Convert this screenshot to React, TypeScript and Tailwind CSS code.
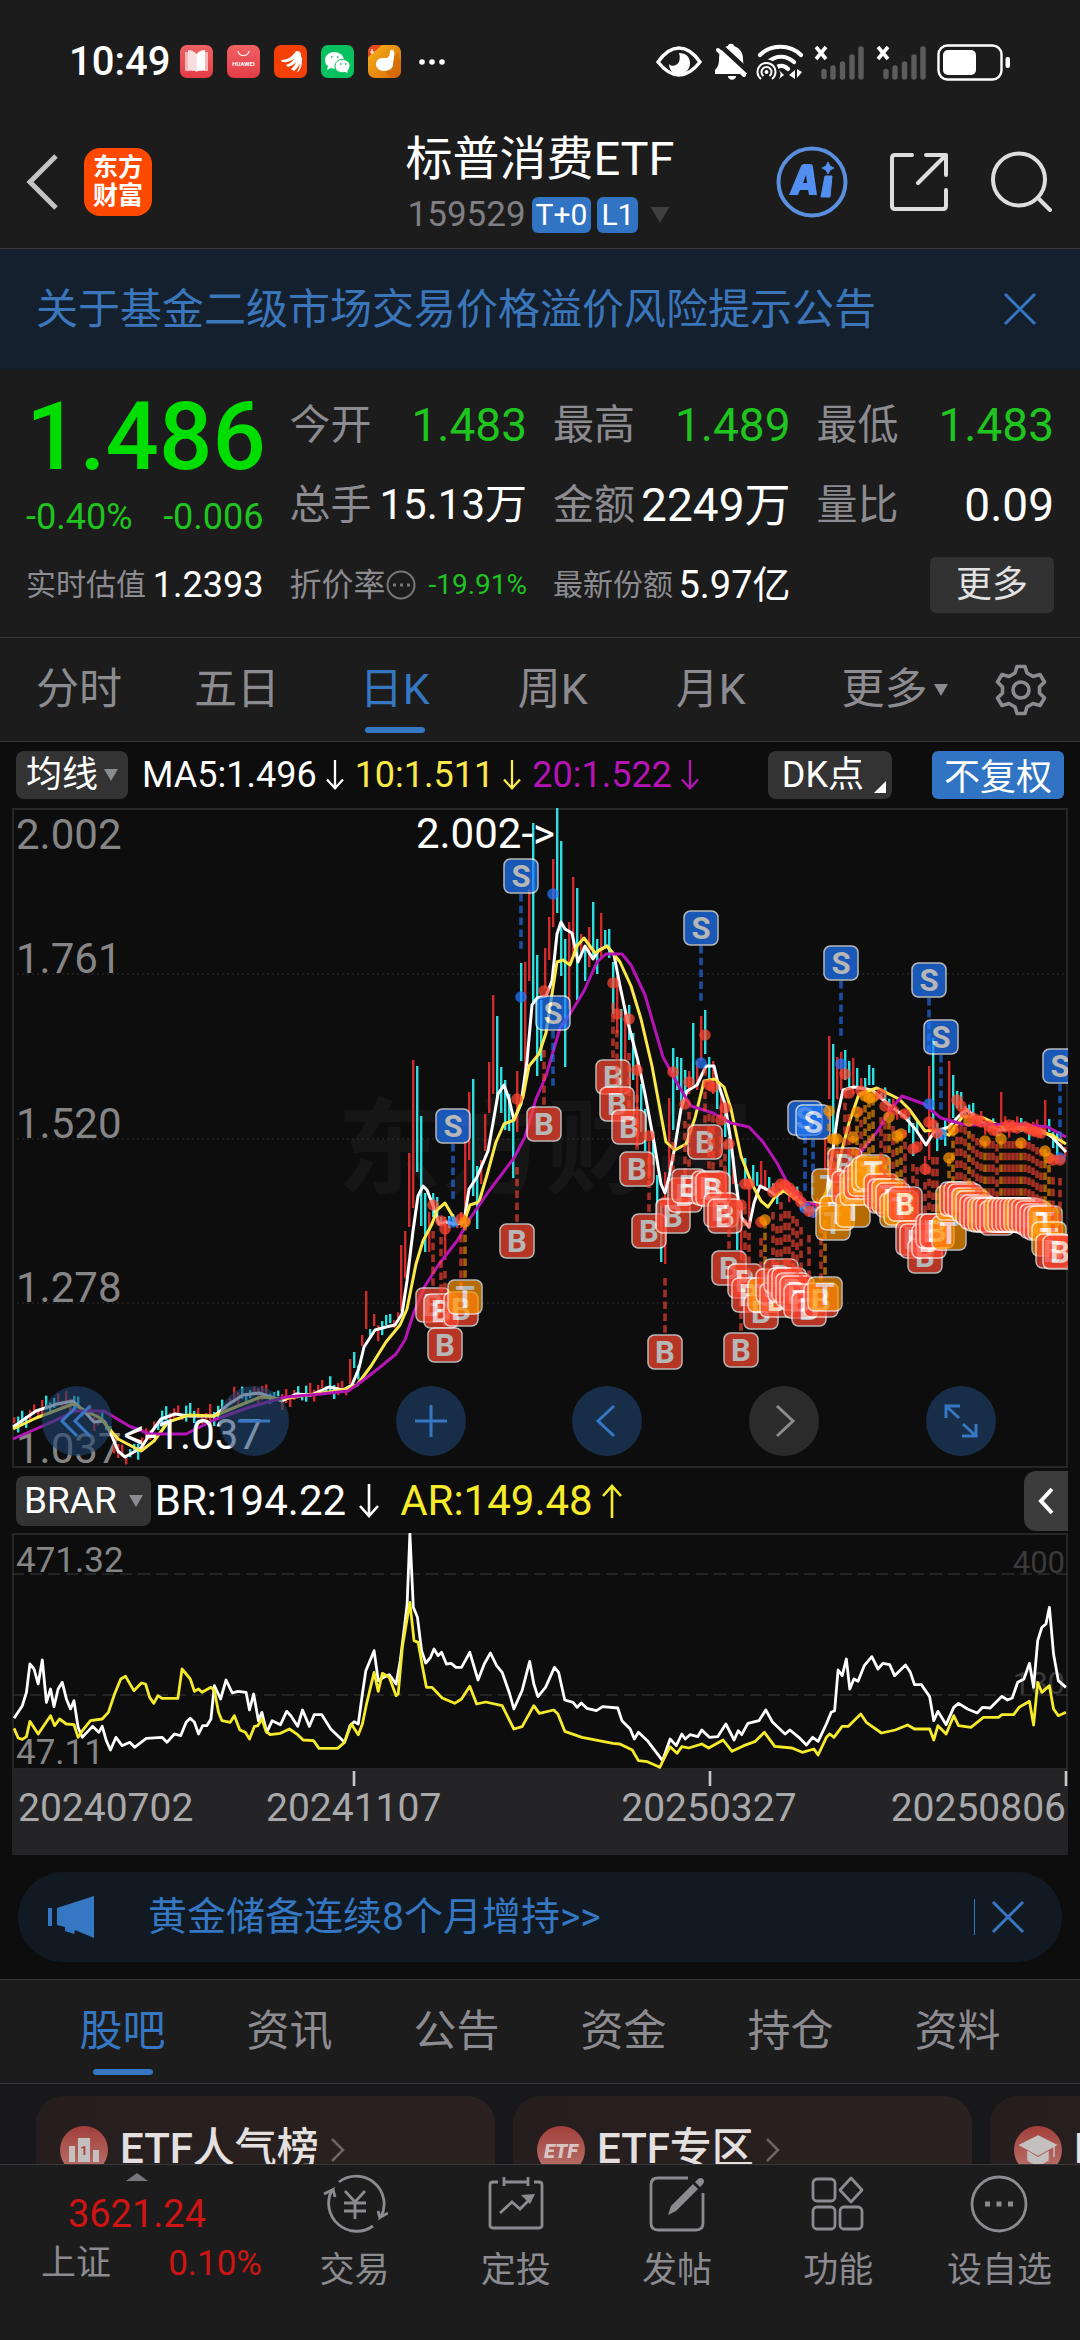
import type { ReactNode } from "react";
import clsx from "clsx";

type Kind = "B" | "S" | "T";
type Point = [number, number];

const periods = ["分时", "五日", "日K", "周K", "月K"];
const sections = ["股吧", "资讯", "公告", "资金", "持仓", "资料"];

const UP = "#d02a2a";
const DOWN = "#2be0e0";

const parse = (s: string): Point[] =>
  s.trim().split(/\s+/).map((p) => p.split(",").map(Number) as Point);

const MA5 = "1,619 24,603 45,596 61,593 72,603 82,614 92,613 99,626 106,643 113,649 129,640 138,626 149,611 163,606 177,608 202,608 217,596 231,587 247,585 259,589 270,593 284,586 299,587 317,579 331,582 340,577 347,560 352,539 363,522 374,519 383,517 390,506 395,473 401,423 406,388 411,378 415,382 422,400 427,416 434,414 443,416 452,414 457,381 465,369 476,343 481,315 486,286 492,277 497,291 502,312 509,296 515,253 520,197 525,190 534,188 540,173 545,126 549,114 553,121 560,125 566,154 573,138 581,151 587,142 595,138 602,147 608,178 615,211 626,253 633,286 642,334 649,376 653,385 657,369 663,338 669,301 675,283 685,277 694,258 702,258 706,275 713,296 719,334 724,376 729,409 737,419 742,395 748,378 756,382 765,388 772,381 783,388 794,402 804,402 813,395 820,348 826,305 831,282 842,279 860,282 876,296 892,308 904,322 914,337 922,324 937,319 945,310 954,301 969,314 987,322 1008,319 1029,322 1040,329 1054,344";
const MA10 = "1,621 24,610 61,596 74,603 88,610 106,631 129,643 142,633 156,614 177,607 202,608 231,596 249,589 270,591 302,586 331,582 345,577 359,558 374,534 388,517 395,501 404,456 411,433 420,416 425,402 433,395 440,407 445,416 452,414 458,397 467,394 475,367 484,334 492,316 502,312 511,289 517,258 527,246 534,225 542,173 545,154 551,152 558,157 565,138 572,130 583,145 595,138 608,154 619,178 629,211 640,258 647,296 654,334 663,342 674,336 683,310 692,273 703,271 712,279 719,301 729,348 740,376 749,393 756,399 765,386 772,383 790,395 808,395 819,376 826,357 837,315 847,286 865,280 887,291 897,301 913,323 922,322 937,327 951,308 972,310 990,319 1019,322 1040,327 1054,336";
const MA20 = "1,631 42,613 63,603 92,603 117,618 138,626 174,626 202,612 238,599 274,589 309,586 336,583 349,574 367,560 384,546 393,532 402,504 413,478 427,456 445,433 459,409 477,383 502,350 513,329 524,291 534,268 548,220 558,206 572,183 585,154 594,146 610,146 619,157 633,187 651,249 665,275 679,298 701,305 719,315 737,319 751,334 765,355 776,376 794,395 808,397 822,388 844,350 865,324 879,301 890,288 912,296 929,310 954,317 1008,316 1036,319 1054,329";

// one entry per session, starting at the breakout: colour, top, bottom
const sessions = `r437-503 r423-470 r345-419 r252-400 c258-364 c308-418 c385-444 r404-444 c385-409 c389-414 c409-416 r409-452
c408-420 c406-418 r410-420 r404-420 r333-414 r284-352 c271-388 c358-421 r352-376 r306-343 r254-305 r187-286 c208-291
c259-305 c272-322 c286-323 c310-370 r263-324 c155-253 r154-263 r81-173 c15-194 c147-268 c192-253 r140-180 r109-152
r51-119 c0-105 c33-168 c131-259 r114-201 r69-150 c80-192 r126-150 c138-173 r119-159 c94-150 c131-166 r105-150 c122-140
c121-150 c154-206 r168-225 c201-286 r201-253 c197-232 c225-272 r253-338 c276-324 c301-343 r334-371 c324-357 c367-419
c395-454 r364-456 r290-362 c240-322 c249-282 c250-296 c262-286 r263-286 c215-277 r253-282 r208-253 c202-246 c249-272
r253-286 c272-301 r286-310 c296-329 c329-395 r348-376 c376-442 r395-452 c350-378 r371-419 c357-376 c364-378 r353-381
r362-383 c369-383`.split(/\s+/);

const laterSessions: Record<number, string> = {
  106: "r329-362", 107: "r228-291", 108: "c236-329", 109: "r249-291", 110: "r244-282", 111: "c242-272", 112: "c253-282",
  113: "r250-286", 114: "c260-282", 115: "r270-282", 116: "c270-282", 117: "c257-277", 118: "c260-277", 128: "c315-348",
  131: "r348-367", 132: "r258-352", 133: "c230-324", 134: "c315-343", 136: "c310-338", 137: "r253-329", 138: "c267-310",
  139: "c283-300", 140: "c284-301", 143: "c295-310", 150: "r284-315", 155: "c310-324", 161: "r292-324", 162: "c311-324",
  164: "c324-348",
};

const earlySpikes: Record<number, string> = {
  338: "r551-576", 342: "c544-560", 350: "r527-538", 354: "r483-521", 358: "c521-529", 362: "r506-518", 374: "c507-517", 378: "c506-515",
};

const ma5Points = parse(MA5);

function valueAt(x: number) {
  const i = ma5Points.findIndex((p) => p[0] >= x);
  if (i <= 0) return ma5Points[i < 0 ? ma5Points.length - 1 : 0][1];
  const [x0, y0] = ma5Points[i - 1];
  const [x1, y1] = ma5Points[i];
  return y0 + ((y1 - y0) * (x - x0)) / (x1 - x0);
}

function toCandle(x: number, s: string) {
  const [top, bottom] = s.slice(1).split("-").map(Number);
  return { x, top, bottom, up: s[0] === "r" };
}

function quietCandle(x: number, n: number) {
  const mid = valueAt(x) + ((n * 7) % 11) - 6;
  const half = 3 + ((n * 5) % 6);
  return { x, top: mid - half, bottom: mid + half, up: (n * 13) % 7 < 4 };
}

const candles = [
  ...Array.from({ length: 97 }, (_, n) => {
    const x = 2 + n * 4;
    return earlySpikes[x] ? toCandle(x, earlySpikes[x]) : quietCandle(x, n);
  }),
  ...Array.from({ length: 167 }, (_, n) => {
    const x = 389 + n * 4;
    const s = sessions[n] ?? laterSessions[n];
    return s ? toCandle(x, s) : quietCandle(x, n);
  }),
];

// kind, x, y of the badge, y of the dot
const signals: [Kind, number, number, number][] = [
  ["S", 509, 68, 189], ["S", 441, 318, 414], ["S", 541, 205, 86], ["S", 689, 120, 255], ["S", 829, 155, 256],
  ["S", 917, 172, 296], ["S", 929, 229, 326], ["S", 793, 310, 400], ["S", 801, 314, 404], ["S", 1048, 258, 350],
  ["B", 505, 433, 291], ["B", 532, 316, 183], ["B", 421, 497, 397], ["B", 429, 503, 413], ["B", 433, 537, 421], ["B", 449, 501, 411],
  ["T", 453, 489, 414], ["B", 601, 269, 175], ["B", 605, 296, 206], ["B", 617, 319, 211], ["B", 625, 361, 262],
  ["B", 637, 423, 328], ["B", 653, 544, 394], ["B", 661, 408, 264], ["B", 673, 387, 296], ["B", 677, 378, 274],
  ["B", 693, 334, 227], ["B", 697, 380, 277], ["B", 701, 381, 279], ["B", 709, 402, 312], ["B", 713, 408, 300],
  ["B", 717, 460, 336], ["B", 729, 542, 397], ["B", 733, 473, 376], ["B", 737, 487, 376], ["B", 749, 504, 414],
  ["T", 753, 487, 412], ["B", 761, 478, 384], ["B", 765, 492, 380], ["B", 769, 468, 376], ["B", 773, 477, 377],
  ["B", 777, 477, 380], ["B", 781, 482, 384], ["B", 785, 485, 388], ["B", 789, 493, 394], ["B", 797, 501, 403],
  ["B", 809, 492, 398], ["T", 813, 486, 396], ["T", 817, 378, 303], ["T", 821, 415, 331], ["T", 825, 405, 331],
  ["B", 833, 357, 266], ["B", 837, 380, 285], ["T", 841, 402, 329], ["T", 845, 380, 304], ["B", 849, 374, 283],
  ["T", 853, 371, 288], ["T", 857, 366, 290], ["T", 861, 364, 289], ["B", 869, 383, 286], ["B", 873, 388, 298],
  ["T", 877, 388, 309], ["B", 881, 392, 302], ["T", 885, 402, 328], ["T", 889, 400, 326], ["B", 893, 396, 306],
  ["B", 901, 430, 341], ["B", 905, 433, 339], ["B", 913, 448, 361], ["B", 917, 433, 314], ["B", 921, 423, 317],
  ["B", 925, 423, 325], ["T", 937, 425, 350], ["T", 941, 395, 322], ["B", 945, 391, 292], ["B", 949, 391, 298],
  ["B", 953, 393, 305], ["T", 957, 397, 313], ["B", 961, 400, 310], ["B", 965, 404, 312], ["B", 969, 406, 314], ["T", 973, 407, 333],
  ["B", 977, 407, 318], ["B", 981, 407, 322], ["B", 985, 410, 323], ["T", 989, 407, 331], ["B", 993, 407, 319],
  ["B", 997, 407, 317], ["B", 1001, 407, 319], ["B", 1005, 407, 320], ["T", 1009, 407, 335], ["B", 1013, 407, 319],
  ["B", 1017, 408, 321], ["B", 1021, 410, 323], ["B", 1025, 413, 324], ["B", 1029, 415, 325], ["T", 1033, 415, 343],
  ["T", 1037, 431, 350], ["B", 1041, 443, 352], ["B", 1048, 444, 352],
];

const signalFill: Record<Kind, string> = { B: "#ff4630", S: "#2078ff", T: "#ff9500" };

const BR = "20,773 32,735 38,695 43,610 49,625 55,670 61,598 67,725 73,685 78,738 84,685 90,665 96,715 102,745 107,720 113,800 119,830 134,797 143,815 148,797 154,840 160,868 168,830 177,855 188,845 195,860 212,833 235,830 242,845 253,820 262,825 270,785 276,773 282,785 288,820 294,795 300,795 306,775 311,675 320,715 328,658 337,697 345,692 357,695 362,748 368,700 375,780 380,755 387,815 395,780 407,792 416,752 422,765 432,797 439,748 449,797 456,762 467,762 480,805 500,845 508,795 514,783 520,790 526,700 531,630 543,570 549,660 557,650 565,642 575,670 581,600 587,500 591,430 595,219 600,440 606,470 612,570 618,607 625,590 630,565 636,585 641,575 648,610 655,608 662,620 670,620 682,575 694,658 703,610 712,577 721,615 729,635 740,700 746,745 758,690 769,602 775,670 781,708 792,680 805,620 811,635 820,718 832,725 838,740 844,727 852,743 866,750 875,738 897,742 903,780 915,805 921,835 927,815 940,840 962,900 973,835 982,855 990,820 995,835 1002,822 1013,828 1019,808 1030,830 1042,828 1054,790 1066,838 1072,810 1077,822 1086,788 1102,780 1112,748 1122,785 1140,820 1147,808 1160,830 1171,853 1180,830 1188,842 1200,790 1207,755 1212,750 1217,628 1223,645 1229,595 1234,685 1240,655 1246,662 1255,615 1266,588 1275,625 1282,608 1292,612 1299,645 1315,613 1322,635 1328,672 1338,672 1344,690 1350,708 1356,780 1362,752 1374,792 1385,740 1392,728 1405,745 1419,757 1427,740 1438,742 1455,707 1463,718 1470,712 1478,665 1487,655 1495,608 1501,680 1507,540 1513,500 1519,490 1524,440 1530,580 1537,660 1548,680";
const AR = "20,803 26,832 32,836 38,828 43,782 55,820 73,765 79,795 86,775 96,790 107,792 113,830 120,808 131,780 148,775 157,755 166,700 175,655 182,647 194,690 205,667 211,670 217,710 223,728 229,705 235,713 258,713 264,625 276,655 282,692 288,685 293,695 306,680 311,690 317,755 322,780 334,785 340,765 348,808 356,815 362,835 369,798 374,795 380,775 386,812 392,822 407,818 420,805 432,822 440,838 455,840 463,863 490,863 500,845 510,790 520,822 526,790 532,730 543,635 549,692 555,638 565,650 575,705 578,700 584,560 595,425 601,540 607,545 613,615 619,680 627,680 642,712 660,728 670,715 682,677 692,730 705,724 729,735 746,805 758,798 775,735 783,758 804,748 810,760 820,812 845,830 890,848 900,850 918,868 927,900 940,903 958,920 965,890 973,858 983,878 990,858 1000,862 1019,850 1029,862 1050,838 1063,872 1080,855 1096,843 1110,815 1125,857 1150,862 1165,875 1182,865 1188,883 1200,830 1205,820 1211,830 1223,797 1232,797 1250,760 1258,785 1280,817 1300,808 1318,793 1328,805 1350,805 1356,838 1362,795 1374,820 1385,765 1392,795 1410,800 1428,770 1450,770 1455,762 1472,762 1480,740 1495,722 1501,793 1507,665 1513,695 1524,675 1530,745 1537,765 1548,755";

function Signal({ kind, x, y, dot }: { kind: Kind; x: number; y: number; dot: number }) {
  const below = kind !== "S";
  return (
    <g fill={signalFill[kind]}>
      <line
        x1={x}
        x2={x}
        y1={below ? y - 74 : y + 18}
        y2={below ? y - 18 : y + 76}
        stroke={signalFill[kind]}
        strokeWidth="3.6"
        strokeDasharray="7.5 4.3"
        opacity="0.62"
      />
      <circle cx={x} cy={dot} r="5.8" opacity="0.72" />
      <g opacity="0.7">
        <rect x={x - 17} y={y - 17} width="34" height="34" rx="6.5" stroke="#fff" strokeWidth="1.5" />
        <text x={x} y={y + 11} fontSize="31" fontWeight="700" textAnchor="middle" fill="#fff">
          {kind}
        </text>
      </g>
    </g>
  );
}

function StatusIcons() {
  return (
    <svg viewBox="0 0 356 40" className="h-10 w-[356px]" fill="none" stroke="#fff">
      <path d="M3 20C10 10 17 6 24 6s14 4 21 14c-7 9-14 13-21 13S10 29 3 20Z" strokeWidth="3.4" />
      <path d="M24 11c7 0 11 4 11 10s-4 11-11 11-10-5-10-10c2 3 8 2 10-2 1-3 1-6 0-9Z" fill="#fff" stroke="none" />
      <path d="M62 33v-4c3-3 4-6 4-11 0-8 4-12 9-13 0-3 6-3 6 0 6 2 9 7 9 13 0 5 1 8 4 11v4Z" fill="#fff" stroke="none" transform="translate(-2 -1)" />
      <path d="M73 34h8c0 5-8 5-8 0Z" fill="#fff" stroke="none" />
      <path d="m67 5 28 26" stroke="#1c1c1c" strokeWidth="5" />
      <path d="m63 8 26 25" strokeWidth="4" strokeLinecap="round" />
      <path d="M105 13c11-11 30-11 41 0M113 20c8-7 18-7 26 0M122 25c4-2 8-1 11 2" strokeWidth="4.2" strokeLinecap="round" />
      <circle cx="111.5" cy="29.500" r="12" fill="#1c1c1c" stroke="none" />
      <path d="M106 37a9 9 0 1 1 11 0M108.500 34a5 5 0 1 1 6 0" strokeWidth="2" />
      <circle cx="111.5" cy="30" r="2" fill="#fff" stroke="none" />
      <path d="M124 28c2 3 2 6 0 9l5-4ZM134 33l6-5v9Zm8-6v9l5-6Z" fill="#fff" stroke="none" />
      {[0, 62].map((x) => (
        <g key={x} transform={`translate(${x} 0)`}>
          <path d="m161 5 10 12m0-12-10 12" strokeWidth="3.6" />
          <path d="M169 29.500v5M178 26v9M187.500 22v13M197 15v20M206 7v28" stroke="#5c5c5c" strokeWidth="5.4" strokeLinecap="round" />
        </g>
      ))}
      <rect x="283.500" y="3.500" width="63" height="34" rx="9" strokeWidth="2.4" />
      <rect x="288" y="8" width="33" height="25" rx="5" fill="#fff" stroke="none" />
      <rect x="350.500" y="15" width="4.500" height="11" rx="2" fill="#fff" stroke="none" />
    </svg>
  );
}

function AppBadges() {
  return (
    <svg viewBox="0 0 268 34" className="h-[34px] w-[268px]">
      <defs>
        <linearGradient id="pink" x1="0" y1="0" x2="0" y2="1">
          <stop offset="0" stopColor="#ef6262" />
          <stop offset="1" stopColor="#e43c46" />
        </linearGradient>
        <linearGradient id="gold" x1="0" y1="0" x2="1" y2="1">
          <stop offset="0" stopColor="#f5b21a" />
          <stop offset="1" stopColor="#dd6a08" />
        </linearGradient>
      </defs>
      <rect width="33" height="33" rx="7" fill="url(#pink)" />
      <path d="M5 7h4l7 3 7-3h5v19H5Z" fill="#f3b9b9" />
      <path d="M8 5c4 0 7 2 8.500 4v18c-2-2-5-2-8.500-2Z" fill="#f6dcdc" />
      <path d="M25 5c-4 0-7 2-8.500 4v18c2-2 5-2 8.500-2Z" fill="#fff" />
      <rect x="47" width="33" height="33" rx="7" fill="url(#pink)" />
      <path d="M58 6c1 6 10 6 11 0" fill="none" stroke="#fff" strokeWidth="1.200" />
      <text x="63.500" y="21" fontSize="6" fontWeight="700" textAnchor="middle" fill="#fff">HUAWEI</text>
      <rect x="94" width="33" height="33" rx="7" fill="#f44006" />
      <path d="M101 15c7 0 12-4 15-9 1 0 3 0 4 1-3 6-9 11-18 10Zm5 5c6-2 10-7 12-13l3 1c-1 7-6 12-13 14Zm5 4c5-4 7-9 8-15l2 1c1 7-2 12-7 16Zm6 3c3-5 4-10 3-16 2 1 2 2 2 4 0 5-1 9-4 12Z" fill="#fff" />
      <rect x="141" width="33" height="33" rx="7" fill="#07c160" />
      <path d="M154 7c6 0 10 4 10 8-6 0-10 4-9 9l-4-1-4 2 1-4c-2-1-3-3-3-6 0-4 4-8 9-8Z" fill="#fff" />
      <path d="M162.500 14.500c4.500 0 7.500 3 7.500 6 0 2-1 4-2 5v3l-3-1c-6 1-10-2-10-6 0-4 3-7 7.500-7Z" fill="#fff" stroke="#07c160" strokeWidth="1" />
      <path d="M151 12h1.500M157 12h1.500M160 19h1.500M165 19h1.500" stroke="#07c160" strokeWidth="1.600" />
      <rect x="188" width="33" height="33" rx="7" fill="url(#gold)" />
      <path d="M188 12V7a7 7 0 0 1 7-7h7Z" fill="#e8451c" />
      <path d="m205 26 13-19 3 12v7a7 7 0 0 1-7 7h-4Z" fill="#d06206" opacity="0.6" />
      <path d="M207 13c4-2 2-7 4-8 3-1 4 3 3 7 0 3-1 4-1 6 1 5-4 8-9 8s-8-3-8-7c0-3 3-6 6-6Z" fill="#fff" />
      <path d="M190 7h4M192 4v5" stroke="#fff" strokeWidth="1.200" />
      <circle cx="242" cy="17" r="2.800" fill="#fff" />
      <circle cx="252" cy="17" r="2.800" fill="#fff" />
      <circle cx="262" cy="17" r="2.800" fill="#fff" />
    </svg>
  );
}

function Cross() {
  return (
    <svg viewBox="0 0 34 34" className="size-[34px]" fill="none" stroke="#3577c2" strokeWidth="3">
      <path d="m2 2 30 30M32 2 2 32" />
    </svg>
  );
}

function Caret({ className }: { className?: string }) {
  return (
    <svg viewBox="0 0 14 12" className={clsx("h-3 w-3.5", className)} fill="currentColor">
      <path d="M0 0h14L7 12Z" />
    </svg>
  );
}

function Arrow({ up = false, large = false }: { up?: boolean; large?: boolean }) {
  return (
    <svg viewBox="0 0 22 36" className={large ? "h-9 w-[22px]" : "h-8 w-5"} fill="none" stroke="currentColor" strokeWidth="2.600">
      <path d={up ? "M11 35V3M2 13l9-10 9 10" : "M11 1v32M2 23l9 10 9-10"} />
    </svg>
  );
}

function Stat({ label, value, tone, small }: { label: string; value: string; tone?: string; small?: boolean }) {
  return (
    <div className="flex items-center justify-between whitespace-nowrap">
      <dt className="text-[41px] text-[#8b8b90]">{label}</dt>
      <dd className={clsx(small ? "text-[42px]" : "text-[46px]", tone ?? "text-white")}>{value}</dd>
    </div>
  );
}

function Header() {
  return (
    <header className="border-b border-[#38383a]">
      <div className="flex h-[124px] items-center px-[69px]">
        <span className="mr-2.5 text-[40px] font-medium text-white">10:49</span>
        <AppBadges />
        <div className="ml-auto">
          <StatusIcons />
        </div>
      </div>
      <div className="grid h-[124px] grid-cols-[1fr_auto_1fr] items-center pb-2">
        <div className="flex items-center gap-6 pl-6">
          <button aria-label="返回">
            <svg viewBox="0 0 36 56" className="h-14 w-9" fill="none" stroke="#c4c4c4" strokeWidth="5">
              <path d="M32 2 6 28l26 26" />
            </svg>
          </button>
          <a href="#home" className="flex size-[68px] flex-col items-center justify-center rounded-2xl bg-[#ff4800] text-[25px] font-bold leading-7 text-white">
            <span>东方</span>
            <span>财富</span>
          </a>
        </div>
        <div className="flex flex-col items-center">
          <h1 className="text-[47px] leading-[56px] text-white">标普消费ETF</h1>
          <div className="mt-2.5 flex items-center gap-1.5 text-[35px] leading-9">
            <span className="text-[#7f7f83]">159529</span>
            <span className="rounded-md bg-[#3174c4] px-1 text-[30px] text-white">T+0</span>
            <span className="rounded-md bg-[#3174c4] px-1 text-[30px] text-white">L1</span>
            <Caret className="ml-1 h-4 w-6 text-[#3f3f3f]" />
          </div>
        </div>
        <div className="flex items-center justify-end gap-10 pr-7">
          <button aria-label="AI">
            <svg viewBox="0 0 72 72" className="size-[72px]">
              <circle cx="36" cy="36" r="33.500" fill="none" stroke="#5a8fe0" strokeWidth="4" />
              <path d="m13 49 12-29q1-2 3-2h6q3 0 3 3l4 28h-8l-1-5h-8l-2 5Zm14-12h4l-1-8Z" fill="#528ff0" fillRule="evenodd" />
              <path d="M49 30h7l-2 21h-9ZM52 16l2 4 4 2-4 2-2 4-2-4-4-2 4-2Z" fill="#528ff0" stroke="#528ff0" />
            </svg>
          </button>
          <button aria-label="分享">
            <svg viewBox="0 0 62 62" className="size-[62px]" fill="none" stroke="#dedede" strokeWidth="4" strokeLinecap="round" strokeLinejoin="round">
              <path d="M24 4H7q-3 0-3 3v48q0 3 3 3h48q3 0 3-3V39M38 4h20v20M58 4 30 32" />
            </svg>
          </button>
          <button aria-label="搜索">
            <svg viewBox="0 0 62 62" className="size-[62px]" fill="none" stroke="#dedede" strokeWidth="4" strokeLinecap="round">
              <circle cx="29" cy="28.500" r="26" />
              <path d="m48 47 12 12" />
            </svg>
          </button>
        </div>
      </div>
    </header>
  );
}

function Quote() {
  return (
    <section className="border-b border-[#38383a] px-[26px] pb-6 pt-5">
      <div className="grid grid-cols-4 gap-x-[26px]">
        <div className="flex flex-col">
          <div className="text-right text-[94px] font-medium leading-[96px] text-[#00dd00]">1.486</div>
          <div className="mt-3 flex justify-between text-[36px] leading-10 text-[#1fc41f]">
            <span>-0.40%</span>
            <span>-0.006</span>
          </div>
        </div>
        <dl className="col-span-3 grid grid-cols-3 gap-x-[26px] gap-y-2 leading-[72px]">
          <Stat label="今开" value="1.483" tone="text-[#1fc41f]" />
          <Stat label="最高" value="1.489" tone="text-[#1fc41f]" />
          <Stat label="最低" value="1.483" tone="text-[#1fc41f]" />
          <Stat label="总手" value="15.13万" small />
          <Stat label="金额" value="2249万" />
          <Stat label="量比" value="0.09" />
        </dl>
      </div>
      <div className="mt-4 grid grid-cols-4 items-center gap-x-[26px] whitespace-nowrap text-[30px] leading-[56px] text-[#8b8b90]">
        <div className="flex items-center justify-between">
          实时估值<span className="text-[36px] text-white">1.2393</span>
        </div>
        <div className="flex items-center justify-between">
          <span className="flex items-center text-[32px]">
            折价率
            <svg viewBox="0 0 30 30" className="size-[30px]" fill="none" stroke="#77777b" strokeWidth="2">
              <circle cx="15" cy="15" r="13.500" />
              <path d="M7 15h3m4 0h3m4 0h3" strokeWidth="3" />
            </svg>
          </span>
          <span className="text-[28px] text-[#1fc41f]">-19.91%</span>
        </div>
        <div className="flex items-center justify-between">
          最新份额<span className="text-[38px] text-white">5.97亿</span>
        </div>
        <button className="justify-self-end rounded-md bg-[#323232] px-[26px] text-[36px] text-[#e2e2e2]">更多</button>
      </div>
    </section>
  );
}

function PeriodTabs() {
  return (
    <nav className="flex h-[104px] items-center border-b border-[#38383a] text-[43px] text-[#8b8b90]">
      {periods.map((p) => (
        <button key={p} className={clsx("relative h-full flex-[4]", p === "日K" && "text-[#3577c2]")}>
          {p}
          {p === "日K" && <span className="absolute bottom-2 left-1/2 h-1.5 w-[60px] -translate-x-1/2 rounded-full bg-[#3577c2]" />}
        </button>
      ))}
      <button className="flex flex-[4] items-center justify-end gap-1.5 pr-3.5">
        更多
        <Caret />
      </button>
      <button aria-label="设置" className="flex flex-[3] justify-center">
        <svg viewBox="0 0 52 52" className="size-[52px]" fill="none" stroke="#8b8b90" strokeWidth="3.600" strokeLinejoin="round">
          <path d="M22 2.500h8l2 6.500 6 3.500 7-2 4.500 7.500-5 5v6l5 5-4.500 7.500-7-2-6 3.500-2 6.500h-8l-2-6.500-6-3.500-7 2L2.500 34l5-5v-6l-5-5L7 10.500l7 2L20 9Z" />
          <circle cx="26" cy="26" r="8" />
        </svg>
      </button>
    </nav>
  );
}

function ChartButton({ label, muted, children }: { label: string; muted?: boolean; children: ReactNode }) {
  return (
    <button
      aria-label={label}
      className={clsx("flex size-[70px] items-center justify-center rounded-full", muted ? "bg-[#2b2b2b] text-[#8b8b90]" : "bg-[#1f4470]/60 text-[#3577c2]")}
    >
      <svg viewBox="0 0 40 40" className="size-10" fill="none" stroke="currentColor" strokeWidth="3">
        {children}
      </svg>
    </button>
  );
}

function PriceChart() {
  return (
    <div className="relative mx-3">
      <svg viewBox="0 0 1056 660" className="block h-auto w-full overflow-hidden" fontSize="42">
        <text x="325" y="378" fontSize="104" fontWeight="700" fill="#161616">东方财富</text>
        <g stroke="#333" strokeDasharray="2 3">
          <path d="M0 166H1056M0 331H1056M0 495H1056" />
        </g>
        <path d="M1 1H1055V659H1Z" fill="none" stroke="#262626" strokeWidth="2" />
        <g fill="#858585">
          <text x="4" y="41">2.002</text>
          <text x="4" y="165">1.761</text>
          <text x="4" y="330">1.520</text>
          <text x="4" y="494">1.278</text>
          <text x="4" y="655">1.037</text>
        </g>
        {candles.map((c) => (
          <rect key={c.x} x={c.x - 1} y={c.top} width="2.400" height={c.bottom - c.top} fill={c.up ? UP : DOWN} />
        ))}
        <g fill="none" strokeWidth="3" strokeLinejoin="round">
          <polyline points={MA5} stroke="#fff" />
          <polyline points={MA10} stroke="#fbe94b" />
          <polyline points={MA20} stroke="#b414b4" />
        </g>
        {signals.map(([kind, x, y, dot]) => (
          <Signal key={`${kind}${x}`} kind={kind} x={x} y={y} dot={dot} />
        ))}
        <g fill="#fff">
          <text x="543" y="40" textAnchor="end">2.002-&gt;</text>
          <text x="250" y="641" textAnchor="end">&lt;-1.037</text>
        </g>
      </svg>
      <div className="absolute inset-x-0 bottom-3 flex justify-between pl-[30px] pr-[72px]">
        <ChartButton label="快退"><path d="M20 5 5 20l15 15M33 5 18 20l15 15" /></ChartButton>
        <ChartButton label="缩小"><path d="M4 20h32" /></ChartButton>
        <ChartButton label="放大"><path d="M4 20h32M20 4v32" /></ChartButton>
        <ChartButton label="左移"><path d="M27 5 11 20l16 15" /></ChartButton>
        <ChartButton label="右移" muted><path d="m13 5 16 15-16 15" /></ChartButton>
        <ChartButton label="全屏"><path d="M5 17V5h14M5 5l13 12M35 23v12H21M35 35 22 23" /></ChartButton>
      </div>
    </div>
  );
}

function BrarChart() {
  return (
    <div className="mx-3">
      <svg viewBox="0 0 1056 237" className="block h-auto w-full">
        <path d="M1 1H1055V236H1Z" fill="none" stroke="#262626" strokeWidth="2" />
        <path d="M0 41H1056M0 162H1056" stroke="#3c3c3c" strokeDasharray="12 6" />
        <g fontSize="35" fill="#858585">
          <text x="4" y="39">471.32</text>
          <text x="4" y="231">47.11</text>
        </g>
        <g fontSize="31" fill="#3a3a3a" textAnchor="end">
          <text x="1053" y="40">400</text>
          <text x="1053" y="161">180</text>
        </g>
        <svg width="1056" height="236" viewBox="17 217 1534 708" preserveAspectRatio="none" fill="none" strokeWidth="2.800" strokeLinejoin="round">
          <polyline points={BR} stroke="#fff" vectorEffect="non-scaling-stroke" />
          <polyline points={AR} stroke="#f5eb2a" vectorEffect="non-scaling-stroke" />
        </svg>
      </svg>
      <div className="relative flex h-[85px] items-center bg-[#242426] text-[39px] text-[#a9a9ab]">
        <svg viewBox="0 0 1056 16" className="absolute inset-x-0 top-0 h-auto w-full" stroke="#c8c8c8" strokeWidth="2.600">
          <path d="M342 1v15M698 1v15M1054 1v15" />
        </svg>
        <div className="flex w-full pb-2">
          <span className="w-[254px] pl-1.5">20240702</span>
          <span>20241107</span>
          <span className="ml-auto mr-[94px]">20250327</span>
          <span className="pr-0.5">20250806</span>
        </div>
      </div>
    </div>
  );
}

function Cards() {
  return (
    <div className="flex gap-[18px] overflow-hidden bg-[#18181a] pl-9 pt-3">
      <Card title="ETF人气榜">
        <path d="M9 20h6v16H9Zm9-8h12v24H18Zm15 12h6v12h-6Z" fill="#c4c0c0" />
        <text x="24" y="29" fontSize="13" fontWeight="700" textAnchor="middle" fill="#a8403c">1</text>
      </Card>
      <Card title="ETF专区">
        <text x="24" y="32" fontSize="20" fontWeight="900" fontStyle="italic" textAnchor="middle" fill="#d8c4c2">ETF</text>
      </Card>
      <Card title="ETF学堂">
        <path d="m24 10 18 9-18 10L6 19Zm-10 16 10 6 10-6v8q-10 8-20 0Zm26-7v12" fill="#c4c0c0" stroke="#c4c0c0" strokeWidth="1.500" />
      </Card>
    </div>
  );
}

function Card({ title, children }: { title: string; children: ReactNode }) {
  return (
    <a href="#card" className="flex h-[132px] w-[459px] shrink-0 items-start gap-3 rounded-[28px] bg-gradient-to-r from-[#261e1e] to-[#2a2120] px-6 pt-7">
      <svg viewBox="0 0 48 48" className="mt-0.5 size-12 shrink-0">
        <defs>
          <linearGradient id="coin" x1="0" y1="0" x2="0" y2="1">
            <stop offset="0" stopColor="#a33f3a" />
            <stop offset="1" stopColor="#b87670" />
          </linearGradient>
        </defs>
        <circle cx="24" cy="24" r="24" fill="url(#coin)" />
        {children}
      </svg>
      <span className="whitespace-nowrap text-[42px] font-medium leading-[50px] text-[#e4e0e0]">{title}</span>
      <svg viewBox="0 0 14 24" className="mt-3.5 h-6 w-3.5 shrink-0" fill="none" stroke="#6e6664" strokeWidth="2.500">
        <path d="m1 1 11 11L1 23" />
      </svg>
    </a>
  );
}

function NavItem({ label, children }: { label: string; children: ReactNode }) {
  return (
    <a href="#nav" className="flex flex-1 flex-col items-center gap-1.5 pt-2 text-[35px] leading-[52px]">
      <svg viewBox="0 0 66 66" className="size-[66px]" fill="none" stroke="currentColor" strokeWidth="2.800">
        {children}
      </svg>
      {label}
    </a>
  );
}

function BottomNav() {
  return (
    <nav className="flex h-44 shrink-0 border-t border-[#38383a] bg-[#1c1c1c] text-[#8b8b90]">
      <a href="#index" className="flex w-[274px] flex-col items-center pt-2">
        <svg viewBox="0 0 22 8" className="h-2 w-[22px]" fill="#77777b">
          <path d="M0 8 11 0l11 8Z" />
        </svg>
        <span className="mt-2 text-[38px] leading-[50px] text-[#cf1414]">3621.24</span>
        <span className="flex w-full justify-between pl-[41px] pr-3 text-[35px] leading-[50px]">
          上证<span className="text-[#cf1414]">0.10%</span>
        </span>
      </a>
      <NavItem label="交易">
        <path d="M16 9a28 28 0 0 1 42 35l7-4M57 45l-2-7M50 53A28 28 0 0 1 9 17l-8 4M10 16l2 8" transform="translate(1 0)" />
        <path d="m23 18 10 11 10-11M33 29v17M22 30h22M22 38h22" />
      </NavItem>
      <NavItem label="定投">
        <path d="M15 9h-5q-3 0-3 3v40q0 3 3 3h46q3 0 3-3V12q0-3-3-3h-5M21 4v9M45 4v9M21 9h24" />
        <path d="m17 40 12-11 8 7 9-9" />
        <path d="m38 22 14-1-5 10Z" fill="currentColor" stroke="none" />
      </NavItem>
      <NavItem label="发帖">
        <path d="M44 5H14q-7 0-7 7v38q0 7 7 7h38q7 0 7-7V20" />
        <path d="m24 42 3-9 22-22 5 5-22 22ZM51 9l3-3q3-2 5 0t0 5l-3 3Z" fill="currentColor" stroke="none" />
      </NavItem>
      <NavItem label="功能">
        <rect x="8" y="6" width="22" height="22" rx="4" />
        <path d="m46 5 11 12-11 12-11-12Z" strokeLinejoin="round" />
        <rect x="8" y="34" width="22" height="22" rx="4" />
        <rect x="35" y="34" width="22" height="22" rx="4" />
      </NavItem>
      <NavItem label="设自选">
        <circle cx="33" cy="31" r="27" />
        <path d="M19 31h5m6.500 0h5m6.500 0h5" strokeWidth="5" />
      </NavItem>
    </nav>
  );
}

export default function App() {
  return (
    <div className="flex h-screen flex-col bg-[#1c1c1c] [font-family:Roboto,'Noto_Sans_CJK_SC',sans-serif]">
      <div className="min-h-0 flex-1 overflow-hidden">
        <Header />
        <div className="flex h-[120px] items-center justify-between bg-[#14202e] pl-9 pr-[43px] text-[42px] text-[#3b76bb]">
          <a href="#notice">关于基金二级市场交易价格溢价风险提示公告</a>
          <button aria-label="关闭">
            <Cross />
          </button>
        </div>
        <Quote />
        <PeriodTabs />

        <main className="bg-[#0d0d0d] pb-[17px]">
          <div className="flex h-[66px] items-center whitespace-nowrap px-4 text-[36px]">
            <button className="flex h-12 items-center gap-1.5 rounded-lg bg-[#333] px-2.5 text-white">
              均线
              <Caret className="text-[#8b8b90]" />
            </button>
            <span className="ml-3.5 flex items-center gap-2 text-white">MA5:1.496<Arrow /></span>
            <span className="ml-2.5 flex items-center gap-2 text-[#fbe94b]">10:1.511<Arrow /></span>
            <span className="ml-2.5 flex items-center gap-2 text-[#b414b4]">20:1.522<Arrow /></span>
            <button className="ml-auto flex h-12 items-center gap-2.5 rounded-lg bg-[#333] pl-3.5 pr-1.5 text-white">
              DK点
              <svg viewBox="0 0 12 12" className="mb-1.5 size-3 self-end" fill="#fff">
                <path d="M12 0v12H0Z" />
              </svg>
            </button>
            <button className="ml-10 h-12 rounded-md bg-[#3174c4] px-3 text-white">不复权</button>
          </div>
          <PriceChart />
          <div className="flex h-[65px] items-center whitespace-nowrap pl-4 pr-3 text-[42px] text-white">
            <button className="flex h-[50px] items-center gap-3 rounded-lg bg-[#333] px-2 text-[37px]">
              BRAR
              <Caret className="text-[#8b8b90]" />
            </button>
            <span className="ml-1 flex items-center gap-3">BR:194.22<Arrow large /></span>
            <span className="ml-5 flex items-center gap-2 text-[#f5eb2a]">AR:149.48<Arrow up large /></span>
            <button aria-label="展开" className="ml-auto flex h-[60px] w-11 items-center justify-center rounded-l-xl bg-[#3c3c3c]">
              <svg viewBox="0 0 18 28" className="h-7 w-[18px]" fill="none" stroke="#fff" strokeWidth="4">
                <path d="M15 2 4 14l11 12" />
              </svg>
            </button>
          </div>
          <BrarChart />
          <div className="mx-[18px] mt-[17px] flex h-[90px] items-center rounded-full bg-[#111a23] pl-[30px] pr-[37px] text-[#3577c2]">
            <svg viewBox="0 0 46 42" className="h-[42px] w-[46px]" fill="#3577c2">
              <path d="M0 12h4v18H0ZM9 12 46 0v42l-19-8-1 4-9-3v-4l-8-2Z" />
            </svg>
            <a href="#news" className="ml-[54px] text-[39px]">黄金储备连续8个月增持&gt;&gt;</a>
            <span className="ml-auto mr-4 h-9 w-px bg-[#3577c2]" />
            <button aria-label="关闭">
              <Cross />
            </button>
          </div>
        </main>

        <nav className="grid h-[105px] grid-cols-6 border-y border-[#38383a] px-[39px] text-[43px] text-[#8b8b90]">
          {sections.map((s) => (
            <button key={s} className={clsx("relative", s === "股吧" && "text-[#3577c2]")}>
              {s}
              {s === "股吧" && <span className="absolute bottom-2 left-1/2 h-1.5 w-[60px] -translate-x-1/2 rounded-full bg-[#3577c2]" />}
            </button>
          ))}
        </nav>
        <Cards />
      </div>
      <BottomNav />
    </div>
  );
}
